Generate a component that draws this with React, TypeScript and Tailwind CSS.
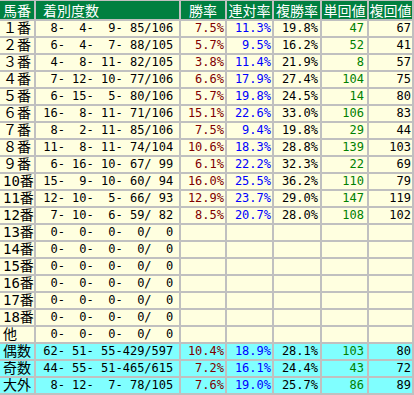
import React from "react";

type Row = {
  label: string;
  counts: number[];
  win?: string;
  ren?: string;
  fuku?: string;
  tan?: number;
  fukuVal?: number;
  summary?: boolean;
};

const rows: Row[] = [
  { label: "１番", counts: [8, 4, 9, 85, 106], win: "7.5", ren: "11.3", fuku: "19.8", tan: 47, fukuVal: 67 },
  { label: "２番", counts: [6, 4, 7, 88, 105], win: "5.7", ren: "9.5", fuku: "16.2", tan: 52, fukuVal: 41 },
  { label: "３番", counts: [4, 8, 11, 82, 105], win: "3.8", ren: "11.4", fuku: "21.9", tan: 8, fukuVal: 57 },
  { label: "４番", counts: [7, 12, 10, 77, 106], win: "6.6", ren: "17.9", fuku: "27.4", tan: 104, fukuVal: 75 },
  { label: "５番", counts: [6, 15, 5, 80, 106], win: "5.7", ren: "19.8", fuku: "24.5", tan: 14, fukuVal: 80 },
  { label: "６番", counts: [16, 8, 11, 71, 106], win: "15.1", ren: "22.6", fuku: "33.0", tan: 106, fukuVal: 83 },
  { label: "７番", counts: [8, 2, 11, 85, 106], win: "7.5", ren: "9.4", fuku: "19.8", tan: 29, fukuVal: 44 },
  { label: "８番", counts: [11, 8, 11, 74, 104], win: "10.6", ren: "18.3", fuku: "28.8", tan: 139, fukuVal: 103 },
  { label: "９番", counts: [6, 16, 10, 67, 99], win: "6.1", ren: "22.2", fuku: "32.3", tan: 22, fukuVal: 69 },
  { label: "10番", counts: [15, 9, 10, 60, 94], win: "16.0", ren: "25.5", fuku: "36.2", tan: 110, fukuVal: 79 },
  { label: "11番", counts: [12, 10, 5, 66, 93], win: "12.9", ren: "23.7", fuku: "29.0", tan: 147, fukuVal: 119 },
  { label: "12番", counts: [7, 10, 6, 59, 82], win: "8.5", ren: "20.7", fuku: "28.0", tan: 108, fukuVal: 102 },
  { label: "13番", counts: [0, 0, 0, 0, 0] },
  { label: "14番", counts: [0, 0, 0, 0, 0] },
  { label: "15番", counts: [0, 0, 0, 0, 0] },
  { label: "16番", counts: [0, 0, 0, 0, 0] },
  { label: "17番", counts: [0, 0, 0, 0, 0] },
  { label: "18番", counts: [0, 0, 0, 0, 0] },
  { label: "他", counts: [0, 0, 0, 0, 0] },
  { label: "偶数", counts: [62, 51, 55, 429, 597], win: "10.4", ren: "18.9", fuku: "28.1", tan: 103, fukuVal: 80, summary: true },
  { label: "奇数", counts: [44, 55, 51, 465, 615], win: "7.2", ren: "16.1", fuku: "24.4", tan: 43, fukuVal: 72, summary: true },
  { label: "大外", counts: [8, 12, 7, 78, 105], win: "7.6", ren: "19.0", fuku: "25.7", tan: 86, fukuVal: 89, summary: true },
];

const pad = (n: number) => String(n).padStart(3, " ");
const fmtCounts = (c: number[]) =>
  `${pad(c[0])}-${pad(c[1])}-${pad(c[2])}-${pad(c[3])}/${pad(c[4])}`;
const pct = (v?: string) => (v ? `${v.padStart(4, " ")}%` : "");

const mono = "font-['DejaVu_Sans_Mono','Noto_Sans_CJK_JP',monospace] text-[12px]";
const jp = "font-['DejaVu_Sans_Mono','Noto_Sans_CJK_JP',sans-serif] text-[14px]";

export default function App() {
  const headers = ["馬番", "着別度数", "勝率", "連対率", "複勝率", "単回値", "複回値"];

  return (
    <div className="w-[414px] h-[395px] bg-white">
      <div className="grid grid-cols-[34px_143px_44px_45px_46px_45px_43px] gap-[2px] bg-[#c0c0c0] pt-[1px] pr-[2px] pb-[2px]">
        {/* HEADER */}
        {headers.map((h, i) => (
          <div
            key={h}
            className={`h-[18px] bg-[#008040] text-white leading-[18px] whitespace-nowrap overflow-hidden font-['Noto_Sans_CJK_JP',sans-serif] text-[14px] ${
              i === 1 ? "pl-[7px] text-left" : "text-center"
            }`}
          >
            {h}
          </div>
        ))}

        {/* ROWS */}
        {rows.map((r) => {
          const bg = r.summary ? "bg-[#80ffff]" : "bg-[#ffffe0]";
          const cell = `h-[15px] leading-[15px] whitespace-pre overflow-hidden ${bg}`;
          return (
            <React.Fragment key={r.label}>
              <div className={`${cell} ${jp} pl-[3px] text-black`}>{r.label}</div>
              <div className={`${cell} ${mono} text-black`}>{fmtCounts(r.counts)}</div>
              <div className={`${cell} ${mono} text-right pr-[1px] text-[#800000]`}>{pct(r.win)}</div>
              <div className={`${cell} ${mono} text-right pr-[1px] text-[#0000ff]`}>{pct(r.ren)}</div>
              <div className={`${cell} ${mono} text-right pr-[2px] text-black`}>{pct(r.fuku)}</div>
              <div className={`${cell} ${mono} text-right pr-[3px] text-[#008000]`}>{r.tan ?? ""}</div>
              <div className={`${cell} ${mono} text-right pr-[1px] text-black`}>{r.fukuVal ?? ""}</div>
            </React.Fragment>
          );
        })}
      </div>
    </div>
  );
}
